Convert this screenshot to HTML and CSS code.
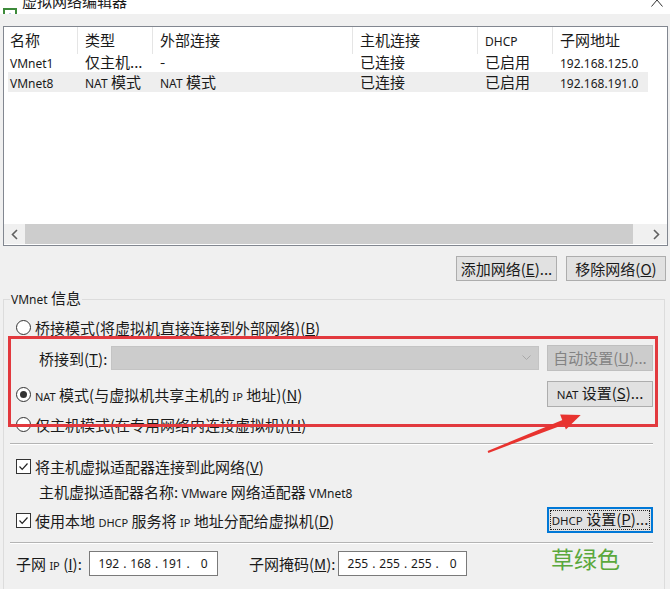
FILE: index.html
```html
<!DOCTYPE html>
<html lang="zh-CN">
<head>
    <meta charset="UTF-8">
    <title>虚拟网络编辑器</title>
    <link rel="stylesheet" href="styles.css">
</head>
<body>
    <div class="titlebar">
        <svg class="app-icon" width="16" height="16" viewBox="0 0 16 16">
            <rect x="1" y="1" width="14" height="14" fill="#3d8a3a"/>
            <rect x="3" y="3" width="10" height="10" fill="#fff"/>
            <path d="M3 13 L8 6 L13 13 Z" fill="#2f6fb5"/>
        </svg>
        <span class="title">虚拟网络编辑器</span>
        <svg class="close" width="12" height="14" viewBox="0 0 12 14">
            <path d="M0.5 0.5 L11.5 13.5 M11.5 0.5 L0.5 13.5" stroke="#333" stroke-width="1" fill="none"/>
        </svg>
    </div>

    <div class="netlist">
        <div class="list-head">
            <div>名称</div>
            <div>类型</div>
            <div>外部连接</div>
            <div>主机连接</div>
            <div><span class="en">DHCP</span></div>
            <div>子网地址</div>
        </div>
        <div class="list-row">
            <div><span class="en">VMnet1</span></div>
            <div>仅主机...</div>
            <div>-</div>
            <div>已连接</div>
            <div>已启用</div>
            <div><span class="en">192.168.125.0</span></div>
        </div>
        <div class="list-row selected">
            <div><span class="en">VMnet8</span></div>
            <div><span class="en">NAT</span> 模式</div>
            <div><span class="en">NAT</span> 模式</div>
            <div>已连接</div>
            <div>已启用</div>
            <div><span class="en">192.168.191.0</span></div>
        </div>
        <div class="list-fill"></div>
        <div class="hscroll">
            <span class="sb-btn">
                <svg width="7" height="11" viewBox="0 0 7 11"><path d="M6 1 L1.5 5.5 L6 10" stroke="#606060" stroke-width="1.6" fill="none"/></svg>
            </span>
            <span class="sb-thumb"></span>
            <span class="sb-track"></span>
            <span class="sb-btn">
                <svg width="7" height="11" viewBox="0 0 7 11"><path d="M1 1 L5.5 5.5 L1 10" stroke="#606060" stroke-width="1.6" fill="none"/></svg>
            </span>
        </div>
    </div>

    <div class="list-actions">
        <button class="btn btn-add">添加网络(<u>E</u>)...</button>
        <button class="btn btn-remove">移除网络(<u>O</u>)</button>
    </div>

    <fieldset class="info">
        <legend><span class="en">VMnet</span> 信息</legend>

        <div class="opt">
            <span class="radio"></span>
            <span>桥接模式(将虚拟机直接连接到外部网络)(<u>B</u>)</span>
        </div>

        <div class="opt bridge">
            <span class="bridge-label">桥接到(<u>T</u>):</span>
            <span class="combo">
                <svg width="9" height="6" viewBox="0 0 9 6"><path d="M0.5 0.5 L4.5 4.5 L8.5 0.5" stroke="#a8a8a8" stroke-width="1" fill="none"/></svg>
            </span>
            <button class="btn btn-side disabled">自动设置(<u>U</u>)...</button>
        </div>

        <div class="opt nat">
            <span class="radio on"></span>
            <span><span class="en-s">NAT</span> 模式(与虚拟机共享主机的 <span class="en-s">IP</span> 地址)(<u>N</u>)</span>
            <button class="btn btn-side"><span class="en-m">NAT</span> 设置(<u>S</u>)...</button>
        </div>

        <div class="opt host">
            <span class="radio"></span>
            <span>仅主机模式(在专用网络内连接虚拟机)(<u>H</u>)</span>
        </div>

        <div class="sep sep-top"></div>

        <div class="opt check-row">
            <span class="check">
                <svg width="13" height="13" viewBox="0 0 13 13"><path d="M2.5 6.5 L5.2 9.3 L10.5 3.5" stroke="#222" stroke-width="1.2" fill="none"/></svg>
            </span>
            <span>将主机虚拟适配器连接到此网络(<u>V</u>)</span>
        </div>

        <div class="opt adapter">
            <span>主机虚拟适配器名称: <span class="en">VMware</span> 网络适配器 <span class="en">VMnet8</span></span>
        </div>

        <div class="opt dhcp">
            <span class="check">
                <svg width="13" height="13" viewBox="0 0 13 13"><path d="M2.5 6.5 L5.2 9.3 L10.5 3.5" stroke="#222" stroke-width="1.2" fill="none"/></svg>
            </span>
            <span>使用本地 <span class="en-s">DHCP</span> 服务将 <span class="en-s">IP</span> 地址分配给虚拟机(<u>D</u>)</span>
            <button class="btn btn-side focused"><span class="en-m">DHCP</span> 设置(<u>P</u>)...</button>
        </div>

        <div class="sep sep-bottom"></div>

        <div class="opt subnet">
            <span class="ip-label">子网 <span class="en-s">IP</span> (<u>I</u>):</span>
            <span class="ip-box en">
                <span>192</span><i>.</i><span>168</span><i>.</i><span>191</span><i>.</i><span>0</span>
            </span>
            <span class="mask-label">子网掩码(<u>M</u>):</span>
            <span class="ip-box en">
                <span>255</span><i>.</i><span>255</span><i>.</i><span>255</span><i>.</i><span>0</span>
            </span>
            <span class="grass">草绿色</span>
        </div>
    </fieldset>

    <div class="mark-box"></div>
    <svg class="mark-arrow" width="110" height="55" viewBox="0 0 110 55">
        <polygon points="7.6,46.1 83.1,14.7 84.9,19.3 8.4,47.9" fill="#e8332f"/>
        <polygon points="80.1,9.6 100.7,10 85.9,24.4" fill="#e8332f"/>
    </svg>
</body>
</html>
```

FILE: styles.css
```css
html,
body {
    margin: 0;
    height: 589px;
    overflow: hidden;
}

body {
    position: relative;
    width: 670px;
    font-family: "Noto Sans CJK SC", sans-serif;
    font-size: 15px;
    color: #1a1a1a;
    background-color: #f0f0f0;
}

.en {
    font-family: "Noto Sans", "Noto Sans CJK SC", sans-serif;
    font-size: 12px;
}

.en-s {
    font-family: "Noto Sans", sans-serif;
    font-size: 11px;
}

.en-m {
    font-family: "Noto Sans", sans-serif;
    font-size: 11.5px;
}

/* title bar, cut off at the top */
.titlebar {
    height: 14px;
    background-color: #fff;
    display: flex;
    align-items: flex-end;
    overflow: hidden;
}

.app-icon {
    flex: none;
    margin: 0 4px -9px 2px;
}

.title {
    line-height: 16px;
    margin-bottom: 5px;
}

.close {
    flex: none;
    align-self: flex-start;
    margin: -7px 7px 0 auto;
}

/* network list */
.netlist {
    margin: 12px 2px 0 3px;
    height: 220px;
    box-sizing: border-box;
    border: 1px solid #828790;
    background-color: #fff;
    display: flex;
    flex-direction: column;
}

.list-head {
    flex: none;
    display: grid;
    grid-template-columns: 74px 75px 200px 125px 75px 1fr;
    height: 25px;
}

.list-head div {
    border-right: 1px solid #e5e5e5;
    padding-left: 7px;
    line-height: 25px;
}

.list-head div:first-child {
    padding-left: 6px;
}

.list-head div:last-child {
    border-right: none;
}

.list-row {
    flex: none;
    display: grid;
    grid-template-columns: 70px 75px 200px 125px 75px 1fr;
    height: 20px;
    line-height: 20px;
    width: 640px;
    margin-left: 4px;
}

.list-row div {
    padding-left: 7px;
    white-space: nowrap;
}

.list-row div:first-child {
    padding-left: 2px;
}

.list-row.selected {
    background-color: #eeeeee;
}

.list-fill {
    flex: 1;
}

.hscroll {
    flex: none;
    display: flex;
    height: 20px;
    margin-bottom: 1px;
    background-color: #f0f0f0;
}

.sb-btn {
    width: 21px;
    display: flex;
    align-items: center;
    justify-content: center;
}

.sb-thumb {
    width: 608px;
    background-color: #cdcdcd;
}

.sb-track {
    flex: 1;
}

/* buttons */
.list-actions {
    display: flex;
    justify-content: flex-end;
    gap: 9px;
    margin: 10px 4px 0 0;
}

.btn {
    font: inherit;
    color: #1a1a1a;
    height: 25px;
    padding: 0;
    line-height: 22px;
    background-color: #e1e1e1;
    border: 1px solid #adadad;
    white-space: nowrap;
}

.btn-add {
    width: 101px;
}

.btn-remove {
    width: 100px;
}

.btn-side {
    flex: none;
    width: 106px;
    height: 26px;
    margin-left: auto;
}

.btn.disabled {
    background-color: #cccccc;
    border-color: #bfbfbf;
    color: #838383;
}

.btn.focused {
    border-color: #0078d7;
    box-shadow: inset 0 0 0 1px #0078d7;
    outline: 1px dotted #222;
    outline-offset: -4px;
}

/* VMnet info group */
.info {
    margin: 7px 5px 0 3px;
    border: 1px solid #dcdcdc;
    padding: 4px 11px 30px 6px;
    min-width: 0;
}

.info legend {
    padding: 0 1px;
    line-height: 20px;
}

.opt {
    display: flex;
    align-items: center;
    height: 26px;
    white-space: nowrap;
}

.radio {
    flex: none;
    width: 15px;
    height: 15px;
    box-sizing: border-box;
    border: 1px solid #333;
    border-radius: 50%;
    background-color: #fff;
    margin: 0 4px 0 6px;
    display: flex;
    align-items: center;
    justify-content: center;
}

.radio.on::after {
    content: "";
    width: 7px;
    height: 7px;
    border-radius: 50%;
    background-color: #333;
}

.bridge {
    margin-top: 5px;
}

.bridge-label {
    width: 72px;
    margin-left: 29px;
}

.combo {
    flex: none;
    width: 428px;
    height: 24px;
    box-sizing: border-box;
    background-color: #cccccc;
    border: 1px solid #c4c4c4;
    display: flex;
    align-items: center;
    justify-content: flex-end;
    padding-right: 7px;
}

.nat {
    margin-top: 10px;
}

.host {
    margin-top: 4px;
}

.sep {
    border-top: 1px solid #b4b4b4;
    border-bottom: 1px solid #fff;
}

.sep-top {
    margin-top: 6px;
}

.sep-bottom {
    margin-top: 9px;
}

.check-row {
    margin-top: 8px;
}

.check {
    flex: none;
    width: 15px;
    height: 15px;
    box-sizing: border-box;
    border: 1px solid #333;
    background-color: #fff;
    margin: 0 4px 0 6px;
    display: flex;
    align-items: center;
    justify-content: center;
}

.adapter {
    height: 24px;
    padding-left: 29px;
}

.dhcp {
    margin-top: 4px;
}

.subnet {
    margin-top: 6px;
}

.ip-label {
    width: 73px;
    margin-left: 6px;
}

.mask-label {
    width: 89px;
    margin-left: 31px;
}

.ip-box {
    flex: none;
    width: 129px;
    height: 25px;
    box-sizing: border-box;
    border: 1px solid #7a7a7a;
    background-color: #fff;
    display: flex;
    align-items: center;
    padding-left: 6px;
}

.ip-box span {
    width: 26px;
    text-align: center;
}

.ip-box i {
    width: 6px;
    font-style: normal;
    text-align: center;
}

.grass {
    align-self: flex-start;
    margin: -4px 0 0 84px;
    font-size: 23px;
    line-height: 24px;
    color: #5aa83c;
}

/* red annotation */
.mark-box {
    position: absolute;
    left: 8px;
    top: 336px;
    width: 650px;
    height: 91px;
    box-sizing: border-box;
    border: 3px solid #e2393e;
}

.mark-arrow {
    position: absolute;
    left: 480px;
    top: 405px;
}
```
